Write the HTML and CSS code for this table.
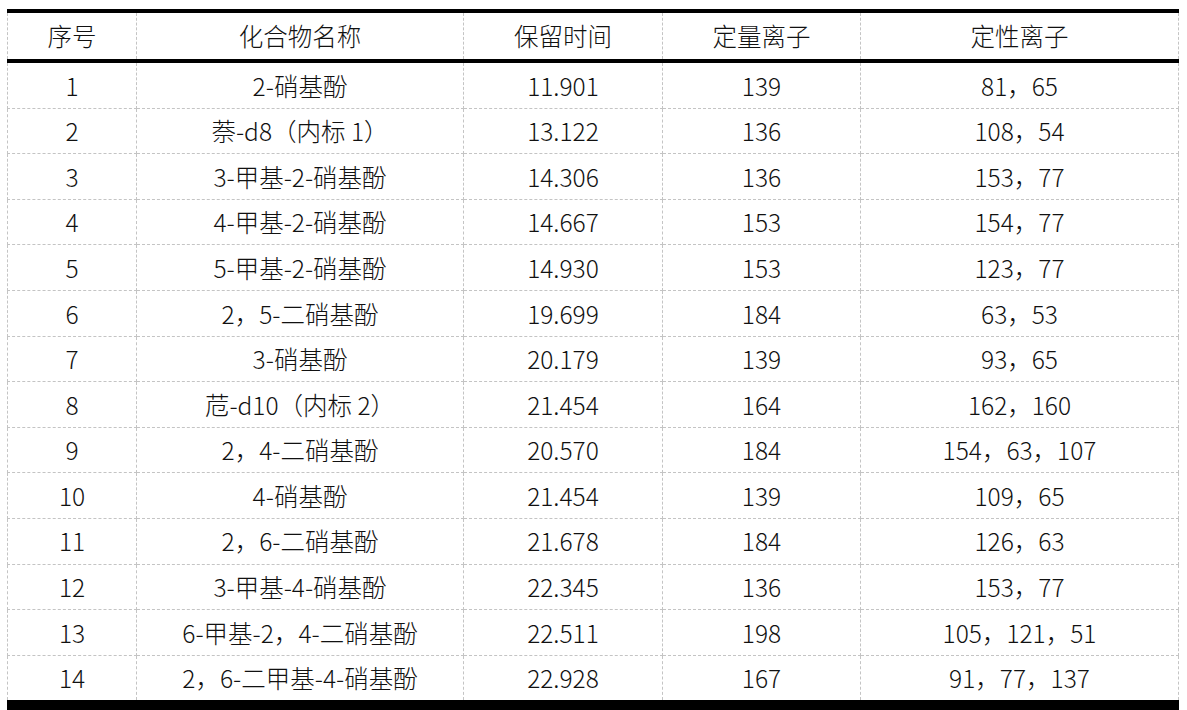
FILE: index.html
```html
<!DOCTYPE html>
<html lang="zh-CN">
<head>
<meta charset="utf-8">
<title>表</title>
<link rel="stylesheet" href="styles.css">
</head>
<body>
<table class="data">
  <colgroup>
    <col class="c1"><col class="c2"><col class="c3"><col class="c4"><col class="c5">
  </colgroup>
  <thead>
    <tr><th>序号</th><th>化合物名称</th><th>保留时间</th><th>定量离子</th><th>定性离子</th></tr>
  </thead>
  <tbody>
    <tr><td>1</td><td>2-硝基酚</td><td class="num">11.901</td><td class="num">139</td><td class="num">81，65</td></tr>
    <tr><td>2</td><td>萘-d8（内标 1）</td><td class="num">13.122</td><td class="num">136</td><td class="num">108，54</td></tr>
    <tr><td>3</td><td>3-甲基-2-硝基酚</td><td class="num">14.306</td><td class="num">136</td><td class="num">153，77</td></tr>
    <tr><td>4</td><td>4-甲基-2-硝基酚</td><td class="num">14.667</td><td class="num">153</td><td class="num">154，77</td></tr>
    <tr><td>5</td><td>5-甲基-2-硝基酚</td><td class="num">14.930</td><td class="num">153</td><td class="num">123，77</td></tr>
    <tr><td>6</td><td>2，5-二硝基酚</td><td class="num">19.699</td><td class="num">184</td><td class="num">63，53</td></tr>
    <tr><td>7</td><td>3-硝基酚</td><td class="num">20.179</td><td class="num">139</td><td class="num">93，65</td></tr>
    <tr><td>8</td><td>苊-d10（内标 2）</td><td class="num">21.454</td><td class="num">164</td><td class="num">162，160</td></tr>
    <tr><td>9</td><td>2，4-二硝基酚</td><td class="num">20.570</td><td class="num">184</td><td class="num">154，63，107</td></tr>
    <tr><td>10</td><td>4-硝基酚</td><td class="num">21.454</td><td class="num">139</td><td class="num">109，65</td></tr>
    <tr><td>11</td><td>2，6-二硝基酚</td><td class="num">21.678</td><td class="num">184</td><td class="num">126，63</td></tr>
    <tr><td>12</td><td>3-甲基-4-硝基酚</td><td class="num">22.345</td><td class="num">136</td><td class="num">153，77</td></tr>
    <tr><td>13</td><td>6-甲基-2，4-二硝基酚</td><td class="num">22.511</td><td class="num">198</td><td class="num">105，121，51</td></tr>
    <tr><td>14</td><td>2，6-二甲基-4-硝基酚</td><td class="num">22.928</td><td class="num">167</td><td class="num">91，77，137</td></tr>
  </tbody>
</table>
</body>
</html>
```
FILE: styles.css
```css
html, body {
  margin: 0;
  padding: 0;
  background: #ffffff;
}
body {
  padding: 9px 0 0 7px;
  font-family: "Noto Sans CJK SC", "Noto Sans", sans-serif;
  color: #111111;
}
.data {
  border-collapse: collapse;
  table-layout: fixed;
  width: 1171px;
  font-size: 24.5px;
  font-weight: 300;
}
.c1 { width: 129px; }
.c2 { width: 327px; }
.c3 { width: 199px; }
.c4 { width: 198px; }
.c5 { width: 318px; }
.data th,
.data td {
  text-align: center;
  vertical-align: middle;
  padding: 0;
  font-weight: 300;
  line-height: 1;
  border-left: 1px dashed #c4c4c4;
  border-right: 1px dashed #c4c4c4;
  border-bottom: 1px dashed #c4c4c4;
}
.data thead th {
  height: 46px;
  border-top: 4px solid #000;
  border-bottom: 4px solid #000;
}
.data tbody td {
  height: 43.6px;
  padding-top: 1px;
}
.data tbody tr:last-child td {
  border-bottom: 10px solid #000;
}
```
